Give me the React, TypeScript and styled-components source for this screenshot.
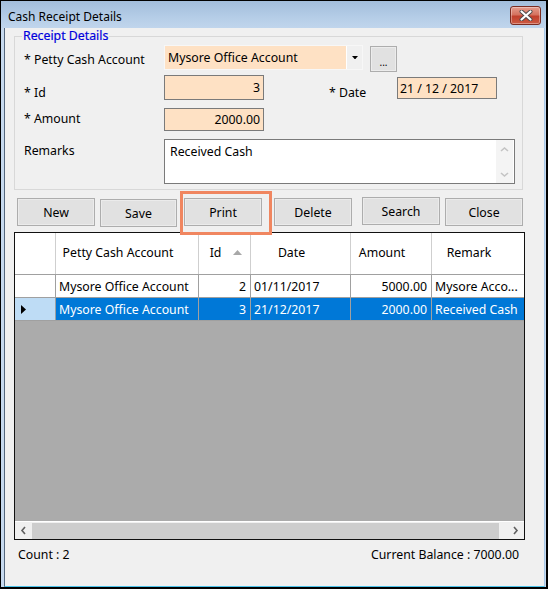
import React from "react";
import styled, { createGlobalStyle } from "styled-components";

const GlobalStyle = createGlobalStyle`
  html, body {
    margin: 0;
    padding: 0;
    background: #ffffff;
  }
  body {
    font-family: "Noto Sans", "DejaVu Sans", sans-serif;
    font-size: 12.3px;
    color: #000;
  }
  * {
    box-sizing: border-box;
  }
`;

interface Entry {
  account: string;
  id: number;
  date: string;
  amount: string;
  remark: string;
}

const entries: Entry[] = [
  { account: "Mysore Office Account", id: 2, date: "01/11/2017", amount: "5000.00", remark: "Mysore Acco..." },
  { account: "Mysore Office Account", id: 3, date: "21/12/2017", amount: "2000.00", remark: "Received Cash" },
];

const columns = [
  { title: "Petty Cash Account", sorted: false },
  { title: "Id", sorted: true },
  { title: "Date", sorted: false },
  { title: "Amount", sorted: false },
  { title: "Remark", sorted: false },
];

const Chevron = ({ dir, color = "#606060" }: { dir: "left" | "right" | "up" | "down"; color?: string }) => {
  const paths = {
    left: "M5 1 L2 4.5 L5 8",
    right: "M2 1 L5 4.5 L2 8",
    up: "M1 5 L4.5 2 L8 5",
    down: "M1 2 L4.5 5 L8 2",
  };
  const vertical = dir === "up" || dir === "down";
  return (
    <svg width={vertical ? 9 : 7} height={vertical ? 7 : 9} viewBox={vertical ? "0 0 9 7" : "0 0 7 9"}>
      <path d={paths[dir]} fill="none" stroke={color} strokeWidth="1.6" />
    </svg>
  );
};

const CashReceiptDetails = () => {
  return (
    <Window>
      <TitleBar>
        <Title>Cash Receipt Details</Title>
        <CloseButton>
          <svg width="14" height="11" viewBox="0 0 14 11">
            <path d="M2.5 1.5 L11.5 9.5 M11.5 1.5 L2.5 9.5" stroke="#4a4a4a" strokeWidth="4" strokeLinecap="round" />
            <path d="M2.5 1.5 L11.5 9.5 M11.5 1.5 L2.5 9.5" stroke="#ffffff" strokeWidth="2.2" strokeLinecap="round" />
          </svg>
        </CloseButton>
      </TitleBar>
      <Client>
        <Group>
          <Legend>Receipt Details</Legend>
          <FormRow $top={1}>
            <FieldLabel $w={140} $dy={6}>* Petty Cash Account</FieldLabel>
            <Combo>
              <ComboText>Mysore Office Account</ComboText>
              <ComboDrop>
                <svg width="7" height="4" viewBox="0 0 7 4">
                  <path d="M0 0 L7 0 L3.5 4 Z" fill="#000" />
                </svg>
              </ComboDrop>
            </Combo>
            <SmallButton>...</SmallButton>
          </FormRow>
          <FormRow $top={3}>
            <FieldLabel $w={140} $dy={8.5}>* Id</FieldLabel>
            <TextBox $w={100} $h={25} $right>3</TextBox>
            <FieldLabel $w={68} $dy={9} $gap={65}>* Date</FieldLabel>
            <TextBox $w={100} $h={22} $dy={2}>21 / 12 / 2017</TextBox>
          </FormRow>
          <FormRow $top={7}>
            <FieldLabel $w={140} $dy={1.5}>* Amount</FieldLabel>
            <TextBox $w={100} $h={23} $right>2000.00</TextBox>
          </FormRow>
          <FormRow $top={8}>
            <FieldLabel $w={140} $dy={2.5}>Remarks</FieldLabel>
            <Remarks>
              <RemarksText>Received Cash</RemarksText>
              <VScroll>
                <Chevron dir="up" color="#c4c4c4" />
                <Chevron dir="down" color="#c4c4c4" />
              </VScroll>
            </Remarks>
          </FormRow>
        </Group>

        <ButtonBar>
          <ActionButton $gap={12}>New</ActionButton>
          <ActionButton $gap={5} $w={77} $dy={1}>Save</ActionButton>
          <Highlight>
            <ActionButton $gap={0}>Print</ActionButton>
          </Highlight>
          <ActionButton $gap={2}>Delete</ActionButton>
          <ActionButton $gap={10} $dy={-1}>Search</ActionButton>
          <ActionButton $gap={5}>Close</ActionButton>
        </ButtonBar>

        <Grid>
          <HeadRow>
            <HeadCell />
            {columns.map((c) => (
              <HeadCell key={c.title}>
                <HeadText>{c.title}</HeadText>
                <SortSlot>
                  {c.sorted && (
                    <svg width="9" height="5" viewBox="0 0 9 5">
                      <path d="M0 5 L4.5 0 L9 5 Z" fill="#a8a8a8" />
                    </svg>
                  )}
                </SortSlot>
              </HeadCell>
            ))}
          </HeadRow>
          {entries.map((e, i) => {
            const selected = i === entries.length - 1;
            return (
              <BodyRow key={e.id} $selected={selected}>
                <RowHeader $selected={selected}>
                  {selected && (
                    <svg width="5" height="9" viewBox="0 0 5 9">
                      <path d="M0 0 L5 4.5 L0 9 Z" fill="#000" />
                    </svg>
                  )}
                </RowHeader>
                <Cell>{e.account}</Cell>
                <Cell $right>{e.id}</Cell>
                <Cell>{e.date}</Cell>
                <Cell $right>{e.amount}</Cell>
                <Cell>{e.remark}</Cell>
              </BodyRow>
            );
          })}
          <EmptyArea />
          <HScroll>
            <ArrowBox>
              <Chevron dir="left" />
            </ArrowBox>
            <Track>
              <Thumb />
            </Track>
            <ArrowBox>
              <Chevron dir="right" />
            </ArrowBox>
          </HScroll>
        </Grid>

        <Footer>
          <span>Count : 2</span>
          <span>Current Balance : 7000.00</span>
        </Footer>
      </Client>
    </Window>
  );
};

const Window = styled.div`
  width: 548px;
  height: 589px;
  display: flex;
  flex-direction: column;
  border: 1px solid #000;
  border-right-width: 2px;
  border-bottom-width: 2px;
  background: #c6d9ee;
`;

const TitleBar = styled.div`
  height: 27px;
  flex-shrink: 0;
  display: flex;
  align-items: flex-start;
  background: linear-gradient(180deg, #a2bddb 0%, #b5cde7 60%, #c0d5ec 100%);
`;

const Title = styled.div`
  padding: 7px 0 0 7px;
  line-height: 17px;
  font-size: 12px;
  color: #000;
`;

const CloseButton = styled.div`
  margin: 5px 5px 0 auto;
  width: 31px;
  height: 19px;
  display: flex;
  align-items: center;
  justify-content: center;
  border: 1px solid #7b2c21;
  border-radius: 3px;
  background: linear-gradient(180deg, #e59c8d 0%, #d5735f 45%, #c1402c 55%, #cc5a43 100%);
  box-shadow: inset 0 0 0 1px rgba(255, 255, 255, 0.35);
`;

const Client = styled.div`
  flex: 1;
  display: flex;
  flex-direction: column;
  margin: 0 1px 0 3px;
  background: #f0f0f0;
  border-left: 1px solid #55677c;
  border-right: 1px solid #a8c9e8;
  border-bottom: 1px solid #4dc3ea;
`;

const Group = styled.fieldset`
  margin: 0 0 0 9px;
  width: 509px;
  padding: 0 0 5px 9px;
  border: 1px solid #d8d8d8;
  min-width: 0;
`;

const Legend = styled.legend`
  margin-left: -2px;
  padding: 0 1px;
  line-height: 16px;
  color: #0000dc;
  -webkit-text-stroke: 0.2px #0000dc;
`;

const FormRow = styled.div<{ $top: number }>`
  display: flex;
  align-items: flex-start;
  margin-top: ${(p) => p.$top}px;
`;

const FieldLabel = styled.div<{ $w: number; $dy: number; $gap?: number }>`
  width: ${(p) => p.$w}px;
  margin-top: ${(p) => p.$dy}px;
  margin-left: ${(p) => p.$gap ?? 0}px;
  line-height: 17px;
  white-space: nowrap;
`;

const Combo = styled.div`
  width: 199px;
  height: 25px;
  display: flex;
  border: 1px solid #f7f7f7;
  background: #fee1c4;
`;

const ComboText = styled.div`
  flex: 1;
  padding-left: 3px;
  line-height: 23px;
`;

const ComboDrop = styled.div`
  width: 16px;
  display: flex;
  align-items: center;
  justify-content: center;
  border-left: 1px solid #ffffff;
  background: #f0f0f0;
  svg {
    width: 6px;
    height: 3.5px;
  }
`;

const SmallButton = styled.div`
  width: 27px;
  height: 26px;
  margin: 1px 0 0 7px;
  display: flex;
  align-items: flex-end;
  justify-content: center;
  padding-bottom: 3px;
  font-size: 10px;
  line-height: 12px;
  border: 1px solid #adadad;
  background: #e1e1e1;
  box-shadow: inset 0 0 0 1px #ececec;
`;

const TextBox = styled.div<{ $w: number; $h: number; $dy?: number; $right?: boolean }>`
  width: ${(p) => p.$w}px;
  height: ${(p) => p.$h}px;
  margin-top: ${(p) => p.$dy ?? 0}px;
  display: flex;
  align-items: center;
  justify-content: ${(p) => (p.$right ? "flex-end" : "flex-start")};
  padding: 0 3px 0 2px;
  border: 1px solid #7a7a7a;
  background: #fee1c4;
  white-space: nowrap;
`;

const Remarks = styled.div`
  width: 351px;
  height: 45px;
  display: flex;
  border: 1px solid #7a7a7a;
  background: #ffffff;
`;

const RemarksText = styled.div`
  flex: 1;
  padding: 3px 0 0 5px;
  line-height: 17px;
`;

const VScroll = styled.div`
  width: 17px;
  margin-right: 1px;
  display: flex;
  flex-direction: column;
  align-items: center;
  justify-content: space-between;
  padding: 6px 0 5px;
  background: #f4f4f4;
`;

const ButtonBar = styled.div`
  display: flex;
  align-items: flex-start;
  margin-top: 8px;
`;

const ActionButton = styled.div<{ $gap: number; $w?: number; $dy?: number }>`
  width: ${(p) => p.$w ?? 78}px;
  height: 28px;
  flex-shrink: 0;
  margin-left: ${(p) => p.$gap}px;
  margin-top: ${(p) => p.$dy ?? 0}px;
  display: flex;
  align-items: center;
  justify-content: center;
  padding-top: 1px;
  border: 1px solid #adadad;
  background: #e1e1e1;
  box-shadow: inset 0 0 0 1px #ebebeb;
`;

const Highlight = styled.div`
  position: relative;
  z-index: 2;
  margin: -7px 0 -9px 3px;
  padding: 4px 7px 6px 1px;
  border: 3px solid #f08660;
`;

const Grid = styled.div`
  margin: 5px 0 0 9px;
  width: 511px;
  height: 308px;
  display: flex;
  flex-direction: column;
  border: 1px solid #111;
  background: #ffffff;
`;

const columnTemplate = "41px 143px 52px 100px 81px 1fr";

const HeadRow = styled.div`
  height: 42px;
  display: grid;
  grid-template-columns: ${columnTemplate};
  border-bottom: 1px solid #a0a0a0;
  background: #ffffff;
`;

const HeadCell = styled.div`
  display: flex;
  align-items: center;
  border-right: 1px solid #cfcfcf;
  padding-bottom: 2px;
  &:last-child {
    border-right: none;
  }
`;

const HeadText = styled.div`
  flex: 1;
  text-align: center;
  white-space: nowrap;
`;

const SortSlot = styled.div`
  width: 18px;
  display: flex;
  justify-content: flex-start;
  padding-left: 1px;
`;

const BodyRow = styled.div<{ $selected?: boolean }>`
  height: 23px;
  display: grid;
  grid-template-columns: ${columnTemplate};
  border-bottom: 1px solid #a0a0a0;
  background: ${(p) => (p.$selected ? "#0078d7" : "#ffffff")};
  color: ${(p) => (p.$selected ? "#ffffff" : "#000000")};
`;

const RowHeader = styled.div<{ $selected?: boolean }>`
  display: flex;
  align-items: center;
  padding-left: 6px;
  border-right: 1px solid #a0a0a0;
  background: ${(p) => (p.$selected ? "#bedcf5" : "#ffffff")};
`;

const Cell = styled.div<{ $right?: boolean }>`
  display: flex;
  align-items: center;
  justify-content: ${(p) => (p.$right ? "flex-end" : "flex-start")};
  padding: 0 ${(p) => (p.$right ? "4px" : "2px")} 0 3px;
  border-right: 1px solid #a0a0a0;
  white-space: nowrap;
  overflow: hidden;
  &:last-child {
    border-right: none;
  }
`;

const EmptyArea = styled.div`
  flex: 1;
  background: #ababab;
`;

const HScroll = styled.div`
  height: 18px;
  display: flex;
  border-top: 1px solid #ffffff;
  background: #f0f0f0;
`;

const ArrowBox = styled.div`
  width: 17px;
  display: flex;
  align-items: center;
  justify-content: center;
`;

const Track = styled.div`
  flex: 1;
  display: flex;
  padding: 1px 0 0;
`;

const Thumb = styled.div`
  width: 467px;
  background: #cdcdcd;
`;

const Footer = styled.div`
  display: flex;
  justify-content: space-between;
  padding: 6px 25px 0 13px;
  line-height: 17px;
`;

export default function App() {
  return (
    <>
      <GlobalStyle />
      <CashReceiptDetails />
    </>
  );
}
